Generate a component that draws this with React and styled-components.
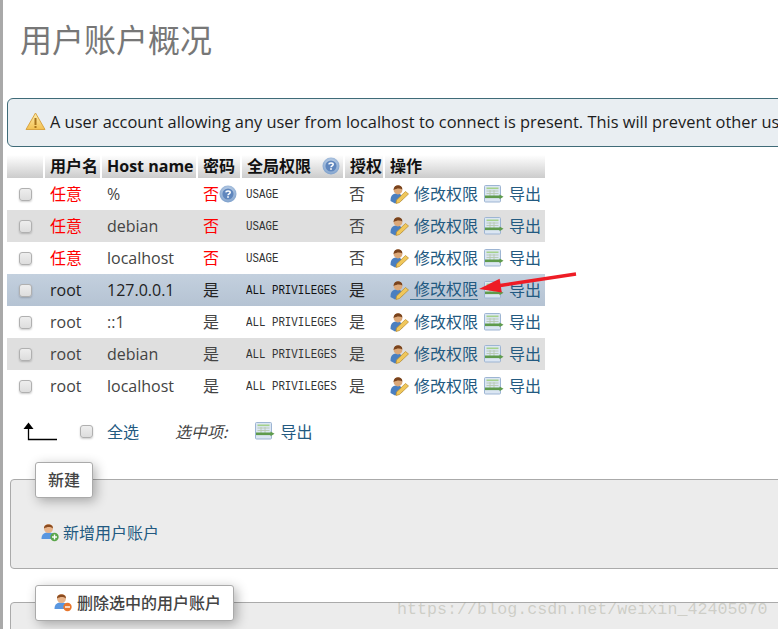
import React from "react";
import styled, { createGlobalStyle } from "styled-components";

const Global = createGlobalStyle`
  html, body { margin: 0; padding: 0; background: #fff; overflow: hidden; }
  body { font-family: "Open Sans", "Noto Sans CJK SC", sans-serif; }
  svg { flex-shrink: 0; }
`;
const CJK = `"Noto Sans CJK SC", sans-serif`;
const Page = styled.div`
  width: 778px; height: 629px; overflow: hidden; position: relative;
  border-left: 3px solid #a9a9a9; box-sizing: border-box; background: #fff;
`;
const Title = styled.h1`
  margin: 0; padding: 17px 0 0 17px; height: 98px; box-sizing: border-box;
  font: 400 32px/42px ${CJK}; color: #777;
`;
const Notice = styled.div`
  width: 900px; height: 49px; margin-left: 4px; box-sizing: border-box;
  border: 1px solid #3f6b78; border-radius: 6px; background: #e9eef2;
  display: flex; align-items: center; padding: 0 0 2px 17px; gap: 4px;
  font: 400 16.4px/22px "Open Sans", sans-serif; color: #1c1c1c; white-space: nowrap;
`;
const Table = styled.div`
  margin: 8px 0 0 4px; width: 538px;
  font: 400 16px/20px "Open Sans", ${CJK}; color: #444;
`;
const cols = "38px 57px 96px 44px 103px 40px 160px";
const HeadRow = styled.div`
  display: grid; grid-template-columns: ${cols}; height: 23px;
`;
const Th = styled.div`
  box-sizing: border-box; height: 23px; padding: 0 0 2px 5px; display: flex; align-items: center; gap: 11px;
  font-weight: 700; color: #111; font-size: 16px; white-space: nowrap;
  background: linear-gradient(#fff, #ccc); border-right: 2px solid #fff;
  &:last-child { border-right: 0; }
`;
const Row = styled.div`
  display: grid; grid-template-columns: ${cols}; height: 32px; align-items: center;
  background: ${p => p.$sel ? "linear-gradient(#c3d0de, #b5c3d3)" : p.$even ? "#dfdfdf" : "#fff"};
`;
const Cell = styled.div`
  padding-left: ${p => p.$pl ?? 5}px; display: flex; align-items: center; white-space: nowrap;
  color: ${p => p.$red ? "#f00" : p.$dark ? "#222" : "#444"};
`;
const Check = styled.span`
  display: inline-block; width: 13px; height: 13px; box-sizing: border-box; flex-shrink: 0;
  margin-left: ${p => p.$ml ?? 0}px;
  border: 1px solid #b0b0b0; border-radius: 3px;
  background: linear-gradient(#eee, #ddd); box-shadow: 0 1px 2px rgba(0,0,0,.2);
`;
const Priv = styled.span`
  display: inline-block; margin-top: 2px; transform: scaleX(.83); transform-origin: left center;
  font: 400 13px/14px "Liberation Mono", "DejaVu Sans Mono", monospace; color: ${p => p.$dark ? "#111" : "#333"};
`;
const ActLink = styled.span`
  color: #235a81; display: inline-flex; align-items: center; gap: ${p => p.$u ? 1 : 5}px; margin-right: 6px;
  span { border-bottom: ${p => p.$u ? "1px solid #3f7396" : "0"}; line-height: 19px; padding-left: ${p => p.$u ? 4 : 0}px; }
`;
const Below = styled.div`
  display: flex; align-items: center; height: 32px; margin: 13px 0 0 20px; font: 400 16px/20px ${CJK}; color: #235a81;
`;
const AllLabel = styled.span`margin: 0 36px 0 14px;`;
const Italic = styled.span`font-style: italic; color: #444; margin-right: 28px;`;
const Fieldset = styled.div`
  position: relative; margin: ${p => p.$mt}px 0 0 7px; height: ${p => p.$h}px; box-sizing: border-box; width: 800px;
  border: 1px solid #aaa; border-radius: 4px 0 0 4px; background: #ececec;
`;
const Legend = styled.div`
  position: absolute; left: 24px; top: -18px; height: 36px; box-sizing: border-box; padding: 0 ${p => p.$pr}px 2px ${p => p.$pl}px;
  background: #fff; border: 1px solid #aaa; border-radius: 3px;
  box-shadow: 3px 3px 12px rgba(0,0,0,.3); display: flex; align-items: center; gap: 5px;
  font: 500 16px/20px ${CJK}; color: #444; white-space: nowrap;
`;
const Add = styled.div`
  display: flex; align-items: center; gap: 4px; padding: 42px 0 0 30px;
  font: 400 16px/20px ${CJK}; color: #235a81;
`;
const Watermark = styled.div`
  position: absolute; left: 394px; top: 600px;
  font: 400 16.7px/20px "Liberation Mono", monospace; color: rgba(150,150,130,.36); white-space: nowrap;
`;
const Arrow = styled.svg`position: absolute; left: 470px; top: 268px;`;

const Warn = () => (
  <svg width="21" height="19" viewBox="0 0 21 19">
    <defs><linearGradient id="w" x1="0" y1="0" x2="0" y2="1"><stop offset="0" stopColor="#fdeeb0" /><stop offset="1" stopColor="#f3c04f" /></linearGradient></defs>
    <path d="M10.5 1 L20 17.5 H1 Z" fill="url(#w)" stroke="#d9a441" strokeLinejoin="round" />
    <rect x="9.5" y="6" width="2" height="7" fill="#a8741c" /><rect x="9.5" y="14" width="2" height="2" fill="#a8741c" />
  </svg>
);
const Help = () => (
  <svg width="18" height="18" viewBox="0 0 18 18">
    <defs><radialGradient id="h" cx=".5" cy=".4" r=".6"><stop offset="0" stopColor="#dbe6f3" /><stop offset="1" stopColor="#7c9fcb" /></radialGradient></defs>
    <circle cx="9" cy="9" r="8.5" fill="url(#h)" />
    <circle cx="9" cy="9" r="5.6" fill="#5f86bd" />
    <path d="M6.8 7.3 C7 5.4 11.2 5.4 11.2 7.4 C11.2 8.8 9 8.8 9 10.3" fill="none" stroke="#fff" strokeWidth="1.5" />
    <rect x="8.2" y="11.2" width="1.6" height="1.6" fill="#fff" />
  </svg>
);
const Person = ({ badge }) => (
  <svg width="18" height="19" viewBox="0 0 18 19">
    <path d="M0.5 16 C0.5 11 3 9.5 7.5 9.5 C12 9.5 14.5 11.5 14.5 16 Z" fill="#5a97e0" />
    <circle cx="7.5" cy="5.5" r="4.5" fill="#e8b48a" />
    <path d="M3 5.5 C2.5 0 12.5 0 12 5.5 C10 3.5 6 3.5 3 5.5 Z" fill="#8a4b1f" />
    <circle cx="13.5" cy="14" r="4.2" fill={badge} />
    <rect x="11" y="13.3" width="5" height="1.4" fill="#fff" />
    {badge === "#5aa64a" && <rect x="12.8" y="11.5" width="1.4" height="5" fill="#fff" />}
  </svg>
);
const Edit = () => (
  <svg width="19" height="20" viewBox="0 0 19 20">
    <path d="M0.5 17 C0.5 11 3 9.5 7.5 9.5 C11 9.5 12.5 12 12.5 16 L5 19.5 Z" fill="#4a7fc0" />
    <circle cx="8" cy="6" r="4.4" fill="#dca878" />
    <path d="M3.6 6 C3 0 12.5 -0.5 12.4 5.5 C10 4 7 4 3.6 6 Z" fill="#7a431c" />
    <path d="M6.5 16 L15.5 7.5 L18.5 10 L9.5 18.5 L6 19.5 Z" fill="#f0c75a" stroke="#b98a2a" strokeWidth=".7" />
  </svg>
);
const Export = () => (
  <svg width="20" height="18" viewBox="0 0 20 18">
    <rect x=".5" y=".5" width="16" height="16.5" rx="1" fill="#dbe6f3" stroke="#9db5d3" />
    <rect x="2.5" y="2.5" width="12" height="1.6" fill="#a5d18b" />
    <path d="M2.5 6 H14.5 M2.5 8.5 H14.5 M6 5 V11 M10 5 V11" stroke="#b5c8b0" strokeWidth=".9" />
    <rect x="1" y="10.5" width="15" height="2.6" fill="#5f9b4c" />
    <path d="M15.5 9.5 L19.5 11.8 L15.5 14.2 Z" fill="#5f9b4c" />
  </svg>
);
const UpArrow = () => (
  <svg width="36" height="20" viewBox="0 0 36 20">
    <path d="M0.5 8 L5.5 1.5 L10.5 8 Z" fill="#000" />
    <path d="M5.5 6 V18.5 H34" fill="none" stroke="#000" strokeWidth="1.3" />
  </svg>
);

const rows = [
  ["任意", "%", "否", 1, "USAGE", "否"],
  ["任意", "debian", "否", 0, "USAGE", "否"],
  ["任意", "localhost", "否", 0, "USAGE", "否"],
  ["root", "127.0.0.1", "是", 0, "ALL PRIVILEGES", "是"],
  ["root", "::1", "是", 0, "ALL PRIVILEGES", "是"],
  ["root", "debian", "是", 0, "ALL PRIVILEGES", "是"],
  ["root", "localhost", "是", 0, "ALL PRIVILEGES", "是"],
];

export default function App() {
  return (
    <Page>
      <Global />
      <Title>用户账户概况</Title>
      <Notice><Warn />A user account allowing any user from localhost to connect is present. This will prevent other users from connecting</Notice>
      <Table>
        <HeadRow>
          <Th /><Th>用户名</Th><Th>Host name</Th><Th>密码</Th><Th>全局权限 <Help /></Th><Th>授权</Th><Th>操作</Th>
        </HeadRow>
        {rows.map((r, i) => {
          const sel = i === 3;
          const red = r[0] === "任意";
          return (
            <Row key={i} $even={i % 2 === 1} $sel={sel}>
              <Cell $pl={12}><Check /></Cell>
              <Cell $red={red} $dark={sel}>{r[0]}</Cell>
              <Cell $dark={sel}>{r[1]}</Cell>
              <Cell $red={red} $dark={sel}>{r[2]}{r[3] ? <Help /> : null}</Cell>
              <Cell $pl={4}><Priv $dark={sel}>{r[4]}</Priv></Cell>
              <Cell $pl={4} $dark={sel}>{r[5]}</Cell>
              <Cell>
                <ActLink $u={sel}><Edit /><span>修改权限</span></ActLink>
                <ActLink><Export /><span>导出</span></ActLink>
              </Cell>
            </Row>
          );
        })}
      </Table>
      <Below>
        <UpArrow />
        <Check $ml={21} />
        <AllLabel>全选</AllLabel>
        <Italic>选中项:</Italic>
        <ActLink><Export /><span>导出</span></ActLink>
      </Below>
      <Fieldset $mt={32} $h={90}>
        <Legend $pl={12} $pr={12}>新建</Legend>
        <Add><Person badge="#5aa64a" />新增用户账户</Add>
      </Fieldset>
      <Fieldset $mt={33} $h={60}>
        <Legend $pl={18} $pr={12}><Person badge="#e8772e" />删除选中的用户账户</Legend>
      </Fieldset>
      <Watermark>https://blog.csdn.net/weixin_42405070</Watermark>
      <Arrow width="110" height="40" viewBox="0 0 110 40">
        <path d="M103 6 L24 18" stroke="#ee1c25" strokeWidth="3.4" fill="none" />
        <path d="M6 21 L28.8 24.5 L26.6 10.7 Z" fill="#ee1c25" />
      </Arrow>
    </Page>
  );
}
